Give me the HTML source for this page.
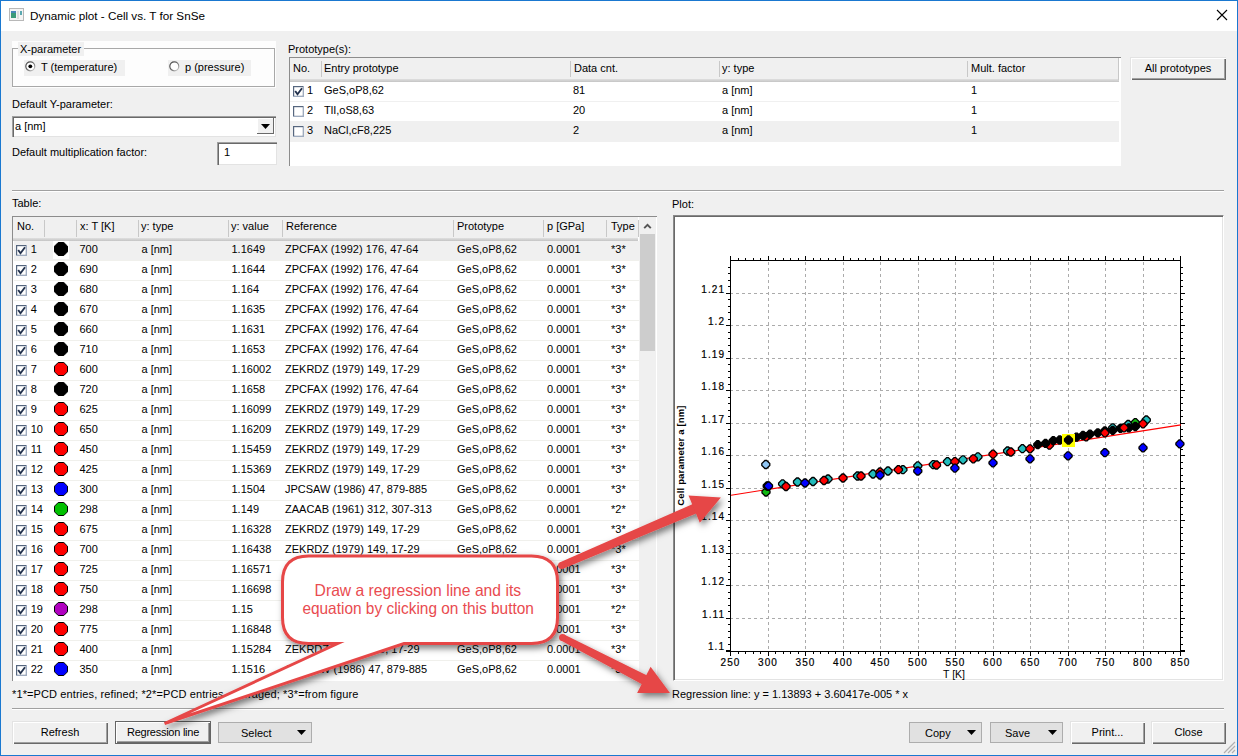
<!DOCTYPE html>
<html><head><meta charset="utf-8"><style>
html,body{margin:0;padding:0;width:1238px;height:756px;overflow:hidden;background:#f0f0f0;}
.t{position:absolute;font-family:"Liberation Sans", sans-serif;font-size:11px;letter-spacing:0px;line-height:13px;white-space:nowrap;color:#000;}
</style></head><body>
<div style="position:absolute;left:0px;top:0px;width:1238px;height:756px;background:#f0f0f0;"></div>
<div style="position:absolute;left:0px;top:0px;width:1238px;height:31px;background:#fff;"></div>
<svg style="position:absolute;left:9px;top:8px" width="15" height="13"><rect x="0.5" y="0.5" width="14" height="12" fill="#f4f4f4" stroke="#b8b8b8"/><rect x="2" y="3" width="5" height="7" fill="#3c9a78"/><rect x="2" y="3" width="5" height="2" fill="#4a86b8"/><rect x="8" y="3" width="2" height="8" fill="#dcdcdc"/><rect x="11" y="3" width="2" height="4" fill="#5aa8b0"/></svg>
<div class="t" style="left:30px;top:9.25px;font-size:11.7px;color:#000;">Dynamic plot - Cell vs. T for SnSe</div>
<svg style="position:absolute;left:1216px;top:9px" width="12" height="12"><path d="M1 1 L11 11 M11 1 L1 11" stroke="#000" stroke-width="1.1"/></svg>
<div style="position:absolute;left:12px;top:41px;width:264px;height:47px;background:#fdfdfd;"></div>
<div style="position:absolute;left:12px;top:48px;width:263px;height:39px;border:1px solid #a8a8a8;box-sizing:border-box;"></div>
<div style="position:absolute;left:18px;top:42px;width:66px;height:14px;background:#f0f0f0;"></div>
<div class="t" style="left:20px;top:42.69px;font-size:11px;color:#000;">X-parameter</div>
<div style="position:absolute;left:24px;top:60px;width:101px;height:16px;background:#f0f0f0;"></div>
<div style="position:absolute;left:168px;top:60px;width:83px;height:16px;background:#f0f0f0;"></div>
<svg style="position:absolute;left:25px;top:61px" width="11" height="11"><defs><linearGradient id="rg" x1="0" y1="0" x2="1" y2="1"><stop offset="0" stop-color="#404040"/><stop offset="0.55" stop-color="#707070"/><stop offset="1" stop-color="#e0e0e0"/></linearGradient></defs><circle cx="5.3" cy="5.3" r="4.5" fill="#fff" stroke="url(#rg)" stroke-width="1.2"/><circle cx="5.3" cy="5.3" r="1.9" fill="#000"/></svg>
<div class="t" style="left:41px;top:61.49px;font-size:11px;color:#000;">T (temperature)</div>
<svg style="position:absolute;left:169px;top:61px" width="11" height="11"><circle cx="5.3" cy="5.3" r="4.5" fill="#fff" stroke="url(#rg)" stroke-width="1.2"/></svg>
<div class="t" style="left:185px;top:61.49px;font-size:11px;color:#000;">p (pressure)</div>
<div class="t" style="left:12px;top:97.79px;font-size:11px;color:#000;">Default Y-parameter:</div>
<div style="position:absolute;left:12px;top:116px;width:263px;height:20px;background:#fff;border-top:1px solid #a0a0a0;border-left:1px solid #a0a0a0;box-shadow:inset 1px 1px 0 #696969, inset -1px -1px 0 #e3e3e3;"></div>
<div style="position:absolute;left:257px;top:118px;width:17px;height:16px;background:#f0f0f0;border-right:1px solid #696969;border-bottom:1px solid #696969;box-sizing:border-box;box-shadow:inset 1px 1px 0 #fff;"></div>
<svg style="position:absolute;left:261px;top:124px" width="9" height="5"><path d="M0 0 H9 L4.5 5 Z" fill="#000"/></svg>
<div class="t" style="left:15px;top:120.19px;font-size:11px;color:#000;">a [nm]</div>
<div class="t" style="left:12px;top:145.59px;font-size:11px;color:#000;">Default multiplication factor:</div>
<div style="position:absolute;left:217px;top:142px;width:59px;height:22px;background:#fff;border-top:1px solid #a0a0a0;border-left:1px solid #a0a0a0;box-shadow:inset 1px 1px 0 #696969, inset -1px -1px 0 #e3e3e3;"></div>
<div class="t" style="left:224px;top:146.19px;font-size:11px;color:#000;">1</div>
<div class="t" style="left:288px;top:42.59px;font-size:11px;color:#000;">Prototype(s):</div>
<div style="position:absolute;left:289px;top:57px;width:832px;height:109px;background:#fff;border-top:1px solid #8c8c8c;border-left:1px solid #8c8c8c;box-sizing:border-box;"></div>
<div style="position:absolute;left:290px;top:58px;width:829px;height:22px;background:#f0f0f0;"></div>
<div style="position:absolute;left:290px;top:79px;width:829px;height:3px;background:linear-gradient(#e0e0e0,#c4c4c4);"></div>
<div style="position:absolute;left:321px;top:61px;width:1px;height:16px;background:#c8c8c8;"></div>
<div style="position:absolute;left:570px;top:61px;width:1px;height:16px;background:#c8c8c8;"></div>
<div style="position:absolute;left:719px;top:61px;width:1px;height:16px;background:#c8c8c8;"></div>
<div style="position:absolute;left:967px;top:61px;width:1px;height:16px;background:#c8c8c8;"></div>
<div style="position:absolute;left:1118px;top:58px;width:1px;height:22px;background:#c8c8c8;"></div>
<div class="t" style="left:293px;top:61.59px;font-size:11px;color:#000;">No.</div>
<div class="t" style="left:324px;top:61.59px;font-size:11px;color:#000;">Entry prototype</div>
<div class="t" style="left:574px;top:61.59px;font-size:11px;color:#000;">Data cnt.</div>
<div class="t" style="left:722px;top:61.59px;font-size:11px;color:#000;">y: type</div>
<div class="t" style="left:971px;top:61.59px;font-size:11px;color:#000;">Mult. factor</div>
<div style="position:absolute;left:290px;top:101px;width:829px;height:1px;background:#f0f0f0;"></div>
<svg style="position:absolute;left:293px;top:86px" width="11" height="11"><rect x="0" y="0" width="11" height="11" fill="#9eabbf"/><rect x="0" y="0" width="10" height="10" fill="#56667e"/><rect x="1.2" y="1.2" width="8.6" height="8.6" fill="#fff"/><path d="M2.2 5 L4.5 8.2 L9 2.2" stroke="#23324d" stroke-width="1.9" fill="none"/></svg>
<div class="t" style="left:307px;top:84.49px;font-size:11px;color:#000;">1</div>
<div class="t" style="left:324px;top:84.49px;font-size:11px;color:#000;">GeS,oP8,62</div>
<div class="t" style="left:573px;top:84.49px;font-size:11px;color:#000;">81</div>
<div class="t" style="left:722px;top:84.49px;font-size:11px;color:#000;">a [nm]</div>
<div class="t" style="left:971px;top:84.49px;font-size:11px;color:#000;">1</div>
<div style="position:absolute;left:290px;top:121px;width:829px;height:1px;background:#f0f0f0;"></div>
<svg style="position:absolute;left:293px;top:106px" width="11" height="11"><rect x="0" y="0" width="11" height="11" fill="#9eabbf"/><rect x="0" y="0" width="10" height="10" fill="#56667e"/><rect x="1.2" y="1.2" width="8.6" height="8.6" fill="#fff"/></svg>
<div class="t" style="left:307px;top:104.49px;font-size:11px;color:#000;">2</div>
<div class="t" style="left:324px;top:104.49px;font-size:11px;color:#000;">TlI,oS8,63</div>
<div class="t" style="left:573px;top:104.49px;font-size:11px;color:#000;">20</div>
<div class="t" style="left:722px;top:104.49px;font-size:11px;color:#000;">a [nm]</div>
<div class="t" style="left:971px;top:104.49px;font-size:11px;color:#000;">1</div>
<div style="position:absolute;left:290px;top:122px;width:829px;height:20px;background:#f0f0f0;"></div>
<div style="position:absolute;left:290px;top:141px;width:829px;height:1px;background:#f0f0f0;"></div>
<svg style="position:absolute;left:293px;top:126px" width="11" height="11"><rect x="0" y="0" width="11" height="11" fill="#9eabbf"/><rect x="0" y="0" width="10" height="10" fill="#56667e"/><rect x="1.2" y="1.2" width="8.6" height="8.6" fill="#fff"/></svg>
<div class="t" style="left:307px;top:124.49px;font-size:11px;color:#000;">3</div>
<div class="t" style="left:324px;top:124.49px;font-size:11px;color:#000;">NaCl,cF8,225</div>
<div class="t" style="left:573px;top:124.49px;font-size:11px;color:#000;">2</div>
<div class="t" style="left:722px;top:124.49px;font-size:11px;color:#000;">a [nm]</div>
<div class="t" style="left:971px;top:124.49px;font-size:11px;color:#000;">1</div>
<div style="position:absolute;left:1130px;top:57px;width:96px;height:23px;background:#f0f0f0;box-sizing:border-box;box-shadow:inset 1px 1px 0 #e3e3e3, inset 2px 2px 0 #fff, inset -1px -1px 0 #696969, inset -2px -2px 0 #a0a0a0;"></div>
<div class="t" style="left:1130px;top:61.5px;width:96px;text-align:center;letter-spacing:0px">All prototypes</div>
<div style="position:absolute;left:12px;top:190px;width:1212px;height:1px;background:#a0a0a0;"></div>
<div style="position:absolute;left:12px;top:191px;width:1212px;height:1px;background:#fff;"></div>
<div class="t" style="left:12px;top:197.39px;font-size:11px;color:#000;">Table:</div>
<div style="position:absolute;left:12px;top:216px;width:645px;height:465px;background:#fff;border-top:1px solid #8c8c8c;border-left:1px solid #8c8c8c;box-sizing:border-box;"></div>
<div style="position:absolute;left:13px;top:217px;width:625px;height:22px;background:#f0f0f0;"></div>
<div style="position:absolute;left:13px;top:238px;width:625px;height:3px;background:linear-gradient(#e0e0e0,#c4c4c4);"></div>
<div style="position:absolute;left:44px;top:220px;width:1px;height:17px;background:#c8c8c8;"></div>
<div style="position:absolute;left:76px;top:220px;width:1px;height:17px;background:#c8c8c8;"></div>
<div style="position:absolute;left:138px;top:220px;width:1px;height:17px;background:#c8c8c8;"></div>
<div style="position:absolute;left:228px;top:220px;width:1px;height:17px;background:#c8c8c8;"></div>
<div style="position:absolute;left:282px;top:220px;width:1px;height:17px;background:#c8c8c8;"></div>
<div style="position:absolute;left:453px;top:220px;width:1px;height:17px;background:#c8c8c8;"></div>
<div style="position:absolute;left:543px;top:220px;width:1px;height:17px;background:#c8c8c8;"></div>
<div style="position:absolute;left:606px;top:220px;width:1px;height:17px;background:#c8c8c8;"></div>
<div style="position:absolute;left:638px;top:220px;width:1px;height:17px;background:#c8c8c8;"></div>
<div class="t" style="left:17px;top:220.49px;font-size:11px;color:#000;">No.</div>
<div class="t" style="left:80px;top:220.49px;font-size:11px;color:#000;">x: T [K]</div>
<div class="t" style="left:141px;top:220.49px;font-size:11px;color:#000;">y: type</div>
<div class="t" style="left:231px;top:220.49px;font-size:11px;color:#000;">y: value</div>
<div class="t" style="left:286px;top:220.49px;font-size:11px;color:#000;">Reference</div>
<div class="t" style="left:457px;top:220.49px;font-size:11px;color:#000;">Prototype</div>
<div class="t" style="left:547px;top:220.49px;font-size:11px;color:#000;">p [GPa]</div>
<div class="t" style="left:611px;top:220.49px;font-size:11px;color:#000;">Type</div>
<div style="position:absolute;left:639px;top:217px;width:17px;height:463px;background:#f0f0f0;"></div>
<div style="position:absolute;left:640px;top:234px;width:15px;height:117px;background:#cdcdcd;"></div>
<svg style="position:absolute;left:643px;top:223px" width="9" height="6"><path d="M1.2 5.2 L4.5 1.8 L7.8 5.2" stroke="#555" stroke-width="1.9" fill="none"/></svg>
<div style="position:absolute;left:14px;top:241px;width:625px;height:439px;overflow:hidden;">
<div style="position:absolute;left:0;top:0px;width:625px;height:19px;background:#f0f0f0"></div>
<div style="position:absolute;left:0;top:19px;width:625px;height:1px;background:#f0f0ec"></div>
<svg style="position:absolute;left:2px;top:4px" width="11" height="11"><rect x="0" y="0" width="11" height="11" fill="#9eabbf"/><rect x="0" y="0" width="10" height="10" fill="#56667e"/><rect x="1.2" y="1.2" width="8.6" height="8.6" fill="#fff"/><path d="M2.2 5 L4.5 8.2 L9 2.2" stroke="#23324d" stroke-width="1.9" fill="none"/></svg>
<div class="t" style="left:16.7px;top:2.29px">1</div>
<div style="position:absolute;left:39px;top:0px;width:16px;height:18px;background:#fff"></div>
<svg style="position:absolute;left:40px;top:1px" width="14" height="14"><polygon points="4.2,0.5 9.8,0.5 13.5,4.2 13.5,9.8 9.8,13.5 4.2,13.5 0.5,9.8 0.5,4.2" fill="#000" stroke="#000" stroke-width="1"/></svg>
<div class="t" style="left:65.4px;top:2.29px">700</div>
<div class="t" style="left:127.5px;top:2.29px">a [nm]</div>
<div class="t" style="left:217.5px;top:2.29px">1.1649</div>
<div class="t" style="left:271px;top:2.29px">ZPCFAX (1992) 176, 47-64</div>
<div class="t" style="left:443px;top:2.29px">GeS,oP8,62</div>
<div class="t" style="left:533px;top:2.29px">0.0001</div>
<div class="t" style="left:597px;top:2.29px">*3*</div>
<div style="position:absolute;left:0;top:39px;width:625px;height:1px;background:#f0f0ec"></div>
<svg style="position:absolute;left:2px;top:24px" width="11" height="11"><rect x="0" y="0" width="11" height="11" fill="#9eabbf"/><rect x="0" y="0" width="10" height="10" fill="#56667e"/><rect x="1.2" y="1.2" width="8.6" height="8.6" fill="#fff"/><path d="M2.2 5 L4.5 8.2 L9 2.2" stroke="#23324d" stroke-width="1.9" fill="none"/></svg>
<div class="t" style="left:16.7px;top:22.29px">2</div>
<div style="position:absolute;left:39px;top:20px;width:16px;height:18px;background:#fff"></div>
<svg style="position:absolute;left:40px;top:21px" width="14" height="14"><polygon points="4.2,0.5 9.8,0.5 13.5,4.2 13.5,9.8 9.8,13.5 4.2,13.5 0.5,9.8 0.5,4.2" fill="#000" stroke="#000" stroke-width="1"/></svg>
<div class="t" style="left:65.4px;top:22.29px">690</div>
<div class="t" style="left:127.5px;top:22.29px">a [nm]</div>
<div class="t" style="left:217.5px;top:22.29px">1.1644</div>
<div class="t" style="left:271px;top:22.29px">ZPCFAX (1992) 176, 47-64</div>
<div class="t" style="left:443px;top:22.29px">GeS,oP8,62</div>
<div class="t" style="left:533px;top:22.29px">0.0001</div>
<div class="t" style="left:597px;top:22.29px">*3*</div>
<div style="position:absolute;left:0;top:59px;width:625px;height:1px;background:#f0f0ec"></div>
<svg style="position:absolute;left:2px;top:44px" width="11" height="11"><rect x="0" y="0" width="11" height="11" fill="#9eabbf"/><rect x="0" y="0" width="10" height="10" fill="#56667e"/><rect x="1.2" y="1.2" width="8.6" height="8.6" fill="#fff"/><path d="M2.2 5 L4.5 8.2 L9 2.2" stroke="#23324d" stroke-width="1.9" fill="none"/></svg>
<div class="t" style="left:16.7px;top:42.29px">3</div>
<div style="position:absolute;left:39px;top:40px;width:16px;height:18px;background:#fff"></div>
<svg style="position:absolute;left:40px;top:41px" width="14" height="14"><polygon points="4.2,0.5 9.8,0.5 13.5,4.2 13.5,9.8 9.8,13.5 4.2,13.5 0.5,9.8 0.5,4.2" fill="#000" stroke="#000" stroke-width="1"/></svg>
<div class="t" style="left:65.4px;top:42.29px">680</div>
<div class="t" style="left:127.5px;top:42.29px">a [nm]</div>
<div class="t" style="left:217.5px;top:42.29px">1.164</div>
<div class="t" style="left:271px;top:42.29px">ZPCFAX (1992) 176, 47-64</div>
<div class="t" style="left:443px;top:42.29px">GeS,oP8,62</div>
<div class="t" style="left:533px;top:42.29px">0.0001</div>
<div class="t" style="left:597px;top:42.29px">*3*</div>
<div style="position:absolute;left:0;top:79px;width:625px;height:1px;background:#f0f0ec"></div>
<svg style="position:absolute;left:2px;top:64px" width="11" height="11"><rect x="0" y="0" width="11" height="11" fill="#9eabbf"/><rect x="0" y="0" width="10" height="10" fill="#56667e"/><rect x="1.2" y="1.2" width="8.6" height="8.6" fill="#fff"/><path d="M2.2 5 L4.5 8.2 L9 2.2" stroke="#23324d" stroke-width="1.9" fill="none"/></svg>
<div class="t" style="left:16.7px;top:62.29px">4</div>
<div style="position:absolute;left:39px;top:60px;width:16px;height:18px;background:#fff"></div>
<svg style="position:absolute;left:40px;top:61px" width="14" height="14"><polygon points="4.2,0.5 9.8,0.5 13.5,4.2 13.5,9.8 9.8,13.5 4.2,13.5 0.5,9.8 0.5,4.2" fill="#000" stroke="#000" stroke-width="1"/></svg>
<div class="t" style="left:65.4px;top:62.29px">670</div>
<div class="t" style="left:127.5px;top:62.29px">a [nm]</div>
<div class="t" style="left:217.5px;top:62.29px">1.1635</div>
<div class="t" style="left:271px;top:62.29px">ZPCFAX (1992) 176, 47-64</div>
<div class="t" style="left:443px;top:62.29px">GeS,oP8,62</div>
<div class="t" style="left:533px;top:62.29px">0.0001</div>
<div class="t" style="left:597px;top:62.29px">*3*</div>
<div style="position:absolute;left:0;top:99px;width:625px;height:1px;background:#f0f0ec"></div>
<svg style="position:absolute;left:2px;top:84px" width="11" height="11"><rect x="0" y="0" width="11" height="11" fill="#9eabbf"/><rect x="0" y="0" width="10" height="10" fill="#56667e"/><rect x="1.2" y="1.2" width="8.6" height="8.6" fill="#fff"/><path d="M2.2 5 L4.5 8.2 L9 2.2" stroke="#23324d" stroke-width="1.9" fill="none"/></svg>
<div class="t" style="left:16.7px;top:82.29px">5</div>
<div style="position:absolute;left:39px;top:80px;width:16px;height:18px;background:#fff"></div>
<svg style="position:absolute;left:40px;top:81px" width="14" height="14"><polygon points="4.2,0.5 9.8,0.5 13.5,4.2 13.5,9.8 9.8,13.5 4.2,13.5 0.5,9.8 0.5,4.2" fill="#000" stroke="#000" stroke-width="1"/></svg>
<div class="t" style="left:65.4px;top:82.29px">660</div>
<div class="t" style="left:127.5px;top:82.29px">a [nm]</div>
<div class="t" style="left:217.5px;top:82.29px">1.1631</div>
<div class="t" style="left:271px;top:82.29px">ZPCFAX (1992) 176, 47-64</div>
<div class="t" style="left:443px;top:82.29px">GeS,oP8,62</div>
<div class="t" style="left:533px;top:82.29px">0.0001</div>
<div class="t" style="left:597px;top:82.29px">*3*</div>
<div style="position:absolute;left:0;top:119px;width:625px;height:1px;background:#f0f0ec"></div>
<svg style="position:absolute;left:2px;top:104px" width="11" height="11"><rect x="0" y="0" width="11" height="11" fill="#9eabbf"/><rect x="0" y="0" width="10" height="10" fill="#56667e"/><rect x="1.2" y="1.2" width="8.6" height="8.6" fill="#fff"/><path d="M2.2 5 L4.5 8.2 L9 2.2" stroke="#23324d" stroke-width="1.9" fill="none"/></svg>
<div class="t" style="left:16.7px;top:102.29px">6</div>
<div style="position:absolute;left:39px;top:100px;width:16px;height:18px;background:#fff"></div>
<svg style="position:absolute;left:40px;top:101px" width="14" height="14"><polygon points="4.2,0.5 9.8,0.5 13.5,4.2 13.5,9.8 9.8,13.5 4.2,13.5 0.5,9.8 0.5,4.2" fill="#000" stroke="#000" stroke-width="1"/></svg>
<div class="t" style="left:65.4px;top:102.29px">710</div>
<div class="t" style="left:127.5px;top:102.29px">a [nm]</div>
<div class="t" style="left:217.5px;top:102.29px">1.1653</div>
<div class="t" style="left:271px;top:102.29px">ZPCFAX (1992) 176, 47-64</div>
<div class="t" style="left:443px;top:102.29px">GeS,oP8,62</div>
<div class="t" style="left:533px;top:102.29px">0.0001</div>
<div class="t" style="left:597px;top:102.29px">*3*</div>
<div style="position:absolute;left:0;top:139px;width:625px;height:1px;background:#f0f0ec"></div>
<svg style="position:absolute;left:2px;top:124px" width="11" height="11"><rect x="0" y="0" width="11" height="11" fill="#9eabbf"/><rect x="0" y="0" width="10" height="10" fill="#56667e"/><rect x="1.2" y="1.2" width="8.6" height="8.6" fill="#fff"/><path d="M2.2 5 L4.5 8.2 L9 2.2" stroke="#23324d" stroke-width="1.9" fill="none"/></svg>
<div class="t" style="left:16.7px;top:122.29px">7</div>
<div style="position:absolute;left:39px;top:120px;width:16px;height:18px;background:#fff"></div>
<svg style="position:absolute;left:40px;top:121px" width="14" height="14"><polygon points="4.2,0.5 9.8,0.5 13.5,4.2 13.5,9.8 9.8,13.5 4.2,13.5 0.5,9.8 0.5,4.2" fill="#f00" stroke="#000" stroke-width="1"/></svg>
<div class="t" style="left:65.4px;top:122.29px">600</div>
<div class="t" style="left:127.5px;top:122.29px">a [nm]</div>
<div class="t" style="left:217.5px;top:122.29px">1.16002</div>
<div class="t" style="left:271px;top:122.29px">ZEKRDZ (1979) 149, 17-29</div>
<div class="t" style="left:443px;top:122.29px">GeS,oP8,62</div>
<div class="t" style="left:533px;top:122.29px">0.0001</div>
<div class="t" style="left:597px;top:122.29px">*3*</div>
<div style="position:absolute;left:0;top:159px;width:625px;height:1px;background:#f0f0ec"></div>
<svg style="position:absolute;left:2px;top:144px" width="11" height="11"><rect x="0" y="0" width="11" height="11" fill="#9eabbf"/><rect x="0" y="0" width="10" height="10" fill="#56667e"/><rect x="1.2" y="1.2" width="8.6" height="8.6" fill="#fff"/><path d="M2.2 5 L4.5 8.2 L9 2.2" stroke="#23324d" stroke-width="1.9" fill="none"/></svg>
<div class="t" style="left:16.7px;top:142.29px">8</div>
<div style="position:absolute;left:39px;top:140px;width:16px;height:18px;background:#fff"></div>
<svg style="position:absolute;left:40px;top:141px" width="14" height="14"><polygon points="4.2,0.5 9.8,0.5 13.5,4.2 13.5,9.8 9.8,13.5 4.2,13.5 0.5,9.8 0.5,4.2" fill="#000" stroke="#000" stroke-width="1"/></svg>
<div class="t" style="left:65.4px;top:142.29px">720</div>
<div class="t" style="left:127.5px;top:142.29px">a [nm]</div>
<div class="t" style="left:217.5px;top:142.29px">1.1658</div>
<div class="t" style="left:271px;top:142.29px">ZPCFAX (1992) 176, 47-64</div>
<div class="t" style="left:443px;top:142.29px">GeS,oP8,62</div>
<div class="t" style="left:533px;top:142.29px">0.0001</div>
<div class="t" style="left:597px;top:142.29px">*3*</div>
<div style="position:absolute;left:0;top:179px;width:625px;height:1px;background:#f0f0ec"></div>
<svg style="position:absolute;left:2px;top:164px" width="11" height="11"><rect x="0" y="0" width="11" height="11" fill="#9eabbf"/><rect x="0" y="0" width="10" height="10" fill="#56667e"/><rect x="1.2" y="1.2" width="8.6" height="8.6" fill="#fff"/><path d="M2.2 5 L4.5 8.2 L9 2.2" stroke="#23324d" stroke-width="1.9" fill="none"/></svg>
<div class="t" style="left:16.7px;top:162.29px">9</div>
<div style="position:absolute;left:39px;top:160px;width:16px;height:18px;background:#fff"></div>
<svg style="position:absolute;left:40px;top:161px" width="14" height="14"><polygon points="4.2,0.5 9.8,0.5 13.5,4.2 13.5,9.8 9.8,13.5 4.2,13.5 0.5,9.8 0.5,4.2" fill="#f00" stroke="#000" stroke-width="1"/></svg>
<div class="t" style="left:65.4px;top:162.29px">625</div>
<div class="t" style="left:127.5px;top:162.29px">a [nm]</div>
<div class="t" style="left:217.5px;top:162.29px">1.16099</div>
<div class="t" style="left:271px;top:162.29px">ZEKRDZ (1979) 149, 17-29</div>
<div class="t" style="left:443px;top:162.29px">GeS,oP8,62</div>
<div class="t" style="left:533px;top:162.29px">0.0001</div>
<div class="t" style="left:597px;top:162.29px">*3*</div>
<div style="position:absolute;left:0;top:199px;width:625px;height:1px;background:#f0f0ec"></div>
<svg style="position:absolute;left:2px;top:184px" width="11" height="11"><rect x="0" y="0" width="11" height="11" fill="#9eabbf"/><rect x="0" y="0" width="10" height="10" fill="#56667e"/><rect x="1.2" y="1.2" width="8.6" height="8.6" fill="#fff"/><path d="M2.2 5 L4.5 8.2 L9 2.2" stroke="#23324d" stroke-width="1.9" fill="none"/></svg>
<div class="t" style="left:16.7px;top:182.29px">10</div>
<div style="position:absolute;left:39px;top:180px;width:16px;height:18px;background:#fff"></div>
<svg style="position:absolute;left:40px;top:181px" width="14" height="14"><polygon points="4.2,0.5 9.8,0.5 13.5,4.2 13.5,9.8 9.8,13.5 4.2,13.5 0.5,9.8 0.5,4.2" fill="#f00" stroke="#000" stroke-width="1"/></svg>
<div class="t" style="left:65.4px;top:182.29px">650</div>
<div class="t" style="left:127.5px;top:182.29px">a [nm]</div>
<div class="t" style="left:217.5px;top:182.29px">1.16209</div>
<div class="t" style="left:271px;top:182.29px">ZEKRDZ (1979) 149, 17-29</div>
<div class="t" style="left:443px;top:182.29px">GeS,oP8,62</div>
<div class="t" style="left:533px;top:182.29px">0.0001</div>
<div class="t" style="left:597px;top:182.29px">*3*</div>
<div style="position:absolute;left:0;top:219px;width:625px;height:1px;background:#f0f0ec"></div>
<svg style="position:absolute;left:2px;top:204px" width="11" height="11"><rect x="0" y="0" width="11" height="11" fill="#9eabbf"/><rect x="0" y="0" width="10" height="10" fill="#56667e"/><rect x="1.2" y="1.2" width="8.6" height="8.6" fill="#fff"/><path d="M2.2 5 L4.5 8.2 L9 2.2" stroke="#23324d" stroke-width="1.9" fill="none"/></svg>
<div class="t" style="left:16.7px;top:202.29px">11</div>
<div style="position:absolute;left:39px;top:200px;width:16px;height:18px;background:#fff"></div>
<svg style="position:absolute;left:40px;top:201px" width="14" height="14"><polygon points="4.2,0.5 9.8,0.5 13.5,4.2 13.5,9.8 9.8,13.5 4.2,13.5 0.5,9.8 0.5,4.2" fill="#f00" stroke="#000" stroke-width="1"/></svg>
<div class="t" style="left:65.4px;top:202.29px">450</div>
<div class="t" style="left:127.5px;top:202.29px">a [nm]</div>
<div class="t" style="left:217.5px;top:202.29px">1.15459</div>
<div class="t" style="left:271px;top:202.29px">ZEKRDZ (1979) 149, 17-29</div>
<div class="t" style="left:443px;top:202.29px">GeS,oP8,62</div>
<div class="t" style="left:533px;top:202.29px">0.0001</div>
<div class="t" style="left:597px;top:202.29px">*3*</div>
<div style="position:absolute;left:0;top:239px;width:625px;height:1px;background:#f0f0ec"></div>
<svg style="position:absolute;left:2px;top:224px" width="11" height="11"><rect x="0" y="0" width="11" height="11" fill="#9eabbf"/><rect x="0" y="0" width="10" height="10" fill="#56667e"/><rect x="1.2" y="1.2" width="8.6" height="8.6" fill="#fff"/><path d="M2.2 5 L4.5 8.2 L9 2.2" stroke="#23324d" stroke-width="1.9" fill="none"/></svg>
<div class="t" style="left:16.7px;top:222.29px">12</div>
<div style="position:absolute;left:39px;top:220px;width:16px;height:18px;background:#fff"></div>
<svg style="position:absolute;left:40px;top:221px" width="14" height="14"><polygon points="4.2,0.5 9.8,0.5 13.5,4.2 13.5,9.8 9.8,13.5 4.2,13.5 0.5,9.8 0.5,4.2" fill="#f00" stroke="#000" stroke-width="1"/></svg>
<div class="t" style="left:65.4px;top:222.29px">425</div>
<div class="t" style="left:127.5px;top:222.29px">a [nm]</div>
<div class="t" style="left:217.5px;top:222.29px">1.15369</div>
<div class="t" style="left:271px;top:222.29px">ZEKRDZ (1979) 149, 17-29</div>
<div class="t" style="left:443px;top:222.29px">GeS,oP8,62</div>
<div class="t" style="left:533px;top:222.29px">0.0001</div>
<div class="t" style="left:597px;top:222.29px">*3*</div>
<div style="position:absolute;left:0;top:259px;width:625px;height:1px;background:#f0f0ec"></div>
<svg style="position:absolute;left:2px;top:244px" width="11" height="11"><rect x="0" y="0" width="11" height="11" fill="#9eabbf"/><rect x="0" y="0" width="10" height="10" fill="#56667e"/><rect x="1.2" y="1.2" width="8.6" height="8.6" fill="#fff"/><path d="M2.2 5 L4.5 8.2 L9 2.2" stroke="#23324d" stroke-width="1.9" fill="none"/></svg>
<div class="t" style="left:16.7px;top:242.29px">13</div>
<div style="position:absolute;left:39px;top:240px;width:16px;height:18px;background:#fff"></div>
<svg style="position:absolute;left:40px;top:241px" width="14" height="14"><polygon points="4.2,0.5 9.8,0.5 13.5,4.2 13.5,9.8 9.8,13.5 4.2,13.5 0.5,9.8 0.5,4.2" fill="#00f" stroke="#000" stroke-width="1"/></svg>
<div class="t" style="left:65.4px;top:242.29px">300</div>
<div class="t" style="left:127.5px;top:242.29px">a [nm]</div>
<div class="t" style="left:217.5px;top:242.29px">1.1504</div>
<div class="t" style="left:271px;top:242.29px">JPCSAW (1986) 47, 879-885</div>
<div class="t" style="left:443px;top:242.29px">GeS,oP8,62</div>
<div class="t" style="left:533px;top:242.29px">0.0001</div>
<div class="t" style="left:597px;top:242.29px">*3*</div>
<div style="position:absolute;left:0;top:279px;width:625px;height:1px;background:#f0f0ec"></div>
<svg style="position:absolute;left:2px;top:264px" width="11" height="11"><rect x="0" y="0" width="11" height="11" fill="#9eabbf"/><rect x="0" y="0" width="10" height="10" fill="#56667e"/><rect x="1.2" y="1.2" width="8.6" height="8.6" fill="#fff"/><path d="M2.2 5 L4.5 8.2 L9 2.2" stroke="#23324d" stroke-width="1.9" fill="none"/></svg>
<div class="t" style="left:16.7px;top:262.29px">14</div>
<div style="position:absolute;left:39px;top:260px;width:16px;height:18px;background:#fff"></div>
<svg style="position:absolute;left:40px;top:261px" width="14" height="14"><polygon points="4.2,0.5 9.8,0.5 13.5,4.2 13.5,9.8 9.8,13.5 4.2,13.5 0.5,9.8 0.5,4.2" fill="#00c000" stroke="#000" stroke-width="1"/></svg>
<div class="t" style="left:65.4px;top:262.29px">298</div>
<div class="t" style="left:127.5px;top:262.29px">a [nm]</div>
<div class="t" style="left:217.5px;top:262.29px">1.149</div>
<div class="t" style="left:271px;top:262.29px">ZAACAB (1961) 312, 307-313</div>
<div class="t" style="left:443px;top:262.29px">GeS,oP8,62</div>
<div class="t" style="left:533px;top:262.29px">0.0001</div>
<div class="t" style="left:597px;top:262.29px">*2*</div>
<div style="position:absolute;left:0;top:299px;width:625px;height:1px;background:#f0f0ec"></div>
<svg style="position:absolute;left:2px;top:284px" width="11" height="11"><rect x="0" y="0" width="11" height="11" fill="#9eabbf"/><rect x="0" y="0" width="10" height="10" fill="#56667e"/><rect x="1.2" y="1.2" width="8.6" height="8.6" fill="#fff"/><path d="M2.2 5 L4.5 8.2 L9 2.2" stroke="#23324d" stroke-width="1.9" fill="none"/></svg>
<div class="t" style="left:16.7px;top:282.29px">15</div>
<div style="position:absolute;left:39px;top:280px;width:16px;height:18px;background:#fff"></div>
<svg style="position:absolute;left:40px;top:281px" width="14" height="14"><polygon points="4.2,0.5 9.8,0.5 13.5,4.2 13.5,9.8 9.8,13.5 4.2,13.5 0.5,9.8 0.5,4.2" fill="#f00" stroke="#000" stroke-width="1"/></svg>
<div class="t" style="left:65.4px;top:282.29px">675</div>
<div class="t" style="left:127.5px;top:282.29px">a [nm]</div>
<div class="t" style="left:217.5px;top:282.29px">1.16328</div>
<div class="t" style="left:271px;top:282.29px">ZEKRDZ (1979) 149, 17-29</div>
<div class="t" style="left:443px;top:282.29px">GeS,oP8,62</div>
<div class="t" style="left:533px;top:282.29px">0.0001</div>
<div class="t" style="left:597px;top:282.29px">*3*</div>
<div style="position:absolute;left:0;top:319px;width:625px;height:1px;background:#f0f0ec"></div>
<svg style="position:absolute;left:2px;top:304px" width="11" height="11"><rect x="0" y="0" width="11" height="11" fill="#9eabbf"/><rect x="0" y="0" width="10" height="10" fill="#56667e"/><rect x="1.2" y="1.2" width="8.6" height="8.6" fill="#fff"/><path d="M2.2 5 L4.5 8.2 L9 2.2" stroke="#23324d" stroke-width="1.9" fill="none"/></svg>
<div class="t" style="left:16.7px;top:302.29px">16</div>
<div style="position:absolute;left:39px;top:300px;width:16px;height:18px;background:#fff"></div>
<svg style="position:absolute;left:40px;top:301px" width="14" height="14"><polygon points="4.2,0.5 9.8,0.5 13.5,4.2 13.5,9.8 9.8,13.5 4.2,13.5 0.5,9.8 0.5,4.2" fill="#f00" stroke="#000" stroke-width="1"/></svg>
<div class="t" style="left:65.4px;top:302.29px">700</div>
<div class="t" style="left:127.5px;top:302.29px">a [nm]</div>
<div class="t" style="left:217.5px;top:302.29px">1.16438</div>
<div class="t" style="left:271px;top:302.29px">ZEKRDZ (1979) 149, 17-29</div>
<div class="t" style="left:443px;top:302.29px">GeS,oP8,62</div>
<div class="t" style="left:533px;top:302.29px">0.0001</div>
<div class="t" style="left:597px;top:302.29px">*3*</div>
<div style="position:absolute;left:0;top:339px;width:625px;height:1px;background:#f0f0ec"></div>
<svg style="position:absolute;left:2px;top:324px" width="11" height="11"><rect x="0" y="0" width="11" height="11" fill="#9eabbf"/><rect x="0" y="0" width="10" height="10" fill="#56667e"/><rect x="1.2" y="1.2" width="8.6" height="8.6" fill="#fff"/><path d="M2.2 5 L4.5 8.2 L9 2.2" stroke="#23324d" stroke-width="1.9" fill="none"/></svg>
<div class="t" style="left:16.7px;top:322.29px">17</div>
<div style="position:absolute;left:39px;top:320px;width:16px;height:18px;background:#fff"></div>
<svg style="position:absolute;left:40px;top:321px" width="14" height="14"><polygon points="4.2,0.5 9.8,0.5 13.5,4.2 13.5,9.8 9.8,13.5 4.2,13.5 0.5,9.8 0.5,4.2" fill="#f00" stroke="#000" stroke-width="1"/></svg>
<div class="t" style="left:65.4px;top:322.29px">725</div>
<div class="t" style="left:127.5px;top:322.29px">a [nm]</div>
<div class="t" style="left:217.5px;top:322.29px">1.16571</div>
<div class="t" style="left:271px;top:322.29px">ZEKRDZ (1979) 149, 17-29</div>
<div class="t" style="left:443px;top:322.29px">GeS,oP8,62</div>
<div class="t" style="left:533px;top:322.29px">0.0001</div>
<div class="t" style="left:597px;top:322.29px">*3*</div>
<div style="position:absolute;left:0;top:359px;width:625px;height:1px;background:#f0f0ec"></div>
<svg style="position:absolute;left:2px;top:344px" width="11" height="11"><rect x="0" y="0" width="11" height="11" fill="#9eabbf"/><rect x="0" y="0" width="10" height="10" fill="#56667e"/><rect x="1.2" y="1.2" width="8.6" height="8.6" fill="#fff"/><path d="M2.2 5 L4.5 8.2 L9 2.2" stroke="#23324d" stroke-width="1.9" fill="none"/></svg>
<div class="t" style="left:16.7px;top:342.29px">18</div>
<div style="position:absolute;left:39px;top:340px;width:16px;height:18px;background:#fff"></div>
<svg style="position:absolute;left:40px;top:341px" width="14" height="14"><polygon points="4.2,0.5 9.8,0.5 13.5,4.2 13.5,9.8 9.8,13.5 4.2,13.5 0.5,9.8 0.5,4.2" fill="#f00" stroke="#000" stroke-width="1"/></svg>
<div class="t" style="left:65.4px;top:342.29px">750</div>
<div class="t" style="left:127.5px;top:342.29px">a [nm]</div>
<div class="t" style="left:217.5px;top:342.29px">1.16698</div>
<div class="t" style="left:271px;top:342.29px">ZEKRDZ (1979) 149, 17-29</div>
<div class="t" style="left:443px;top:342.29px">GeS,oP8,62</div>
<div class="t" style="left:533px;top:342.29px">0.0001</div>
<div class="t" style="left:597px;top:342.29px">*3*</div>
<div style="position:absolute;left:0;top:379px;width:625px;height:1px;background:#f0f0ec"></div>
<svg style="position:absolute;left:2px;top:364px" width="11" height="11"><rect x="0" y="0" width="11" height="11" fill="#9eabbf"/><rect x="0" y="0" width="10" height="10" fill="#56667e"/><rect x="1.2" y="1.2" width="8.6" height="8.6" fill="#fff"/><path d="M2.2 5 L4.5 8.2 L9 2.2" stroke="#23324d" stroke-width="1.9" fill="none"/></svg>
<div class="t" style="left:16.7px;top:362.29px">19</div>
<div style="position:absolute;left:39px;top:360px;width:16px;height:18px;background:#fff"></div>
<svg style="position:absolute;left:40px;top:361px" width="14" height="14"><polygon points="4.2,0.5 9.8,0.5 13.5,4.2 13.5,9.8 9.8,13.5 4.2,13.5 0.5,9.8 0.5,4.2" fill="#b000c0" stroke="#000" stroke-width="1"/></svg>
<div class="t" style="left:65.4px;top:362.29px">298</div>
<div class="t" style="left:127.5px;top:362.29px">a [nm]</div>
<div class="t" style="left:217.5px;top:362.29px">1.15</div>
<div class="t" style="left:271px;top:362.29px">ZAACAB (1961) 312, 307-313</div>
<div class="t" style="left:443px;top:362.29px">GeS,oP8,62</div>
<div class="t" style="left:533px;top:362.29px">0.0001</div>
<div class="t" style="left:597px;top:362.29px">*2*</div>
<div style="position:absolute;left:0;top:399px;width:625px;height:1px;background:#f0f0ec"></div>
<svg style="position:absolute;left:2px;top:384px" width="11" height="11"><rect x="0" y="0" width="11" height="11" fill="#9eabbf"/><rect x="0" y="0" width="10" height="10" fill="#56667e"/><rect x="1.2" y="1.2" width="8.6" height="8.6" fill="#fff"/><path d="M2.2 5 L4.5 8.2 L9 2.2" stroke="#23324d" stroke-width="1.9" fill="none"/></svg>
<div class="t" style="left:16.7px;top:382.29px">20</div>
<div style="position:absolute;left:39px;top:380px;width:16px;height:18px;background:#fff"></div>
<svg style="position:absolute;left:40px;top:381px" width="14" height="14"><polygon points="4.2,0.5 9.8,0.5 13.5,4.2 13.5,9.8 9.8,13.5 4.2,13.5 0.5,9.8 0.5,4.2" fill="#f00" stroke="#000" stroke-width="1"/></svg>
<div class="t" style="left:65.4px;top:382.29px">775</div>
<div class="t" style="left:127.5px;top:382.29px">a [nm]</div>
<div class="t" style="left:217.5px;top:382.29px">1.16848</div>
<div class="t" style="left:271px;top:382.29px">ZEKRDZ (1979) 149, 17-29</div>
<div class="t" style="left:443px;top:382.29px">GeS,oP8,62</div>
<div class="t" style="left:533px;top:382.29px">0.0001</div>
<div class="t" style="left:597px;top:382.29px">*3*</div>
<div style="position:absolute;left:0;top:419px;width:625px;height:1px;background:#f0f0ec"></div>
<svg style="position:absolute;left:2px;top:404px" width="11" height="11"><rect x="0" y="0" width="11" height="11" fill="#9eabbf"/><rect x="0" y="0" width="10" height="10" fill="#56667e"/><rect x="1.2" y="1.2" width="8.6" height="8.6" fill="#fff"/><path d="M2.2 5 L4.5 8.2 L9 2.2" stroke="#23324d" stroke-width="1.9" fill="none"/></svg>
<div class="t" style="left:16.7px;top:402.29px">21</div>
<div style="position:absolute;left:39px;top:400px;width:16px;height:18px;background:#fff"></div>
<svg style="position:absolute;left:40px;top:401px" width="14" height="14"><polygon points="4.2,0.5 9.8,0.5 13.5,4.2 13.5,9.8 9.8,13.5 4.2,13.5 0.5,9.8 0.5,4.2" fill="#f00" stroke="#000" stroke-width="1"/></svg>
<div class="t" style="left:65.4px;top:402.29px">400</div>
<div class="t" style="left:127.5px;top:402.29px">a [nm]</div>
<div class="t" style="left:217.5px;top:402.29px">1.15284</div>
<div class="t" style="left:271px;top:402.29px">ZEKRDZ (1979) 149, 17-29</div>
<div class="t" style="left:443px;top:402.29px">GeS,oP8,62</div>
<div class="t" style="left:533px;top:402.29px">0.0001</div>
<div class="t" style="left:597px;top:402.29px">*3*</div>
<div style="position:absolute;left:0;top:439px;width:625px;height:1px;background:#f0f0ec"></div>
<svg style="position:absolute;left:2px;top:424px" width="11" height="11"><rect x="0" y="0" width="11" height="11" fill="#9eabbf"/><rect x="0" y="0" width="10" height="10" fill="#56667e"/><rect x="1.2" y="1.2" width="8.6" height="8.6" fill="#fff"/><path d="M2.2 5 L4.5 8.2 L9 2.2" stroke="#23324d" stroke-width="1.9" fill="none"/></svg>
<div class="t" style="left:16.7px;top:422.29px">22</div>
<div style="position:absolute;left:39px;top:420px;width:16px;height:18px;background:#fff"></div>
<svg style="position:absolute;left:40px;top:421px" width="14" height="14"><polygon points="4.2,0.5 9.8,0.5 13.5,4.2 13.5,9.8 9.8,13.5 4.2,13.5 0.5,9.8 0.5,4.2" fill="#00f" stroke="#000" stroke-width="1"/></svg>
<div class="t" style="left:65.4px;top:422.29px">350</div>
<div class="t" style="left:127.5px;top:422.29px">a [nm]</div>
<div class="t" style="left:217.5px;top:422.29px">1.1516</div>
<div class="t" style="left:271px;top:422.29px">JPCSAW (1986) 47, 879-885</div>
<div class="t" style="left:443px;top:422.29px">GeS,oP8,62</div>
<div class="t" style="left:533px;top:422.29px">0.0001</div>
<div class="t" style="left:597px;top:422.29px">*3*</div>
</div>
<div class="t" style="left:12px;top:687.59px;font-size:11px;color:#000;letter-spacing:0.12px">*1*=PCD entries, refined; *2*=PCD entries, averaged; *3*=from figure</div>
<div class="t" style="left:672px;top:197.59px;font-size:11px;color:#000;">Plot:</div>
<div style="position:absolute;left:673px;top:215px;width:551px;height:466px;background:#fff;box-sizing:border-box;border-top:1px solid #8a8a8a;border-left:1px solid #8a8a8a;border-right:1px solid #fff;border-bottom:1px solid #fff;box-shadow:inset 1px 1px 0 #696969, inset -1px -1px 0 #e3e3e3;"></div>
<svg style="position:absolute;left:0;top:0" width="1238" height="756" font-family="Liberation Sans, sans-serif">
<line x1="768.5" y1="261" x2="768.5" y2="651" stroke="#ababab" stroke-width="1" stroke-dasharray="3 3" stroke-dashoffset="-1"/>
<line x1="805.5" y1="261" x2="805.5" y2="651" stroke="#ababab" stroke-width="1" stroke-dasharray="3 3" stroke-dashoffset="-1"/>
<line x1="843.5" y1="261" x2="843.5" y2="651" stroke="#ababab" stroke-width="1" stroke-dasharray="3 3" stroke-dashoffset="-1"/>
<line x1="880.5" y1="261" x2="880.5" y2="651" stroke="#ababab" stroke-width="1" stroke-dasharray="3 3" stroke-dashoffset="-1"/>
<line x1="918.5" y1="261" x2="918.5" y2="651" stroke="#ababab" stroke-width="1" stroke-dasharray="3 3" stroke-dashoffset="-1"/>
<line x1="955.5" y1="261" x2="955.5" y2="651" stroke="#ababab" stroke-width="1" stroke-dasharray="3 3" stroke-dashoffset="-1"/>
<line x1="993.5" y1="261" x2="993.5" y2="651" stroke="#ababab" stroke-width="1" stroke-dasharray="3 3" stroke-dashoffset="-1"/>
<line x1="1030.5" y1="261" x2="1030.5" y2="651" stroke="#ababab" stroke-width="1" stroke-dasharray="3 3" stroke-dashoffset="-1"/>
<line x1="1068.5" y1="261" x2="1068.5" y2="651" stroke="#ababab" stroke-width="1" stroke-dasharray="3 3" stroke-dashoffset="-1"/>
<line x1="1105.5" y1="261" x2="1105.5" y2="651" stroke="#ababab" stroke-width="1" stroke-dasharray="3 3" stroke-dashoffset="-1"/>
<line x1="1143.5" y1="261" x2="1143.5" y2="651" stroke="#ababab" stroke-width="1" stroke-dasharray="3 3" stroke-dashoffset="-1"/>
<line x1="731" y1="618.5" x2="1180" y2="618.5" stroke="#ababab" stroke-width="1" stroke-dasharray="3 3" stroke-dashoffset="-11"/>
<line x1="731" y1="585.5" x2="1180" y2="585.5" stroke="#ababab" stroke-width="1" stroke-dasharray="3 3" stroke-dashoffset="-11"/>
<line x1="731" y1="553.5" x2="1180" y2="553.5" stroke="#ababab" stroke-width="1" stroke-dasharray="3 3" stroke-dashoffset="-11"/>
<line x1="731" y1="520.5" x2="1180" y2="520.5" stroke="#ababab" stroke-width="1" stroke-dasharray="3 3" stroke-dashoffset="-11"/>
<line x1="731" y1="488.5" x2="1180" y2="488.5" stroke="#ababab" stroke-width="1" stroke-dasharray="3 3" stroke-dashoffset="-11"/>
<line x1="731" y1="455.5" x2="1180" y2="455.5" stroke="#ababab" stroke-width="1" stroke-dasharray="3 3" stroke-dashoffset="-11"/>
<line x1="731" y1="423.5" x2="1180" y2="423.5" stroke="#ababab" stroke-width="1" stroke-dasharray="3 3" stroke-dashoffset="-11"/>
<line x1="731" y1="390.5" x2="1180" y2="390.5" stroke="#ababab" stroke-width="1" stroke-dasharray="3 3" stroke-dashoffset="-11"/>
<line x1="731" y1="358.5" x2="1180" y2="358.5" stroke="#ababab" stroke-width="1" stroke-dasharray="3 3" stroke-dashoffset="-11"/>
<line x1="731" y1="325.5" x2="1180" y2="325.5" stroke="#ababab" stroke-width="1" stroke-dasharray="3 3" stroke-dashoffset="-11"/>
<line x1="731" y1="293.5" x2="1180" y2="293.5" stroke="#ababab" stroke-width="1" stroke-dasharray="3 3" stroke-dashoffset="-11"/>
<rect x="730" y="256" width="1" height="396" fill="#000"/>
<rect x="726" y="651" width="459" height="1" fill="#000"/>
<rect x="730" y="260" width="451" height="1" fill="#000"/>
<rect x="1180" y="256" width="1" height="396" fill="#000"/>
<rect x="730" y="652" width="1" height="4" fill="#000"/>
<rect x="730" y="256" width="1" height="4" fill="#000"/>
<rect x="738" y="652" width="1" height="2" fill="#000"/>
<rect x="738" y="258" width="1" height="2" fill="#000"/>
<rect x="745" y="652" width="1" height="2" fill="#000"/>
<rect x="745" y="258" width="1" height="2" fill="#000"/>
<rect x="753" y="652" width="1" height="2" fill="#000"/>
<rect x="753" y="258" width="1" height="2" fill="#000"/>
<rect x="760" y="652" width="1" height="2" fill="#000"/>
<rect x="760" y="258" width="1" height="2" fill="#000"/>
<rect x="768" y="652" width="1" height="4" fill="#000"/>
<rect x="768" y="256" width="1" height="4" fill="#000"/>
<rect x="775" y="652" width="1" height="2" fill="#000"/>
<rect x="775" y="258" width="1" height="2" fill="#000"/>
<rect x="783" y="652" width="1" height="2" fill="#000"/>
<rect x="783" y="258" width="1" height="2" fill="#000"/>
<rect x="790" y="652" width="1" height="2" fill="#000"/>
<rect x="790" y="258" width="1" height="2" fill="#000"/>
<rect x="798" y="652" width="1" height="2" fill="#000"/>
<rect x="798" y="258" width="1" height="2" fill="#000"/>
<rect x="805" y="652" width="1" height="4" fill="#000"/>
<rect x="805" y="256" width="1" height="4" fill="#000"/>
<rect x="813" y="652" width="1" height="2" fill="#000"/>
<rect x="813" y="258" width="1" height="2" fill="#000"/>
<rect x="820" y="652" width="1" height="2" fill="#000"/>
<rect x="820" y="258" width="1" height="2" fill="#000"/>
<rect x="828" y="652" width="1" height="2" fill="#000"/>
<rect x="828" y="258" width="1" height="2" fill="#000"/>
<rect x="835" y="652" width="1" height="2" fill="#000"/>
<rect x="835" y="258" width="1" height="2" fill="#000"/>
<rect x="843" y="652" width="1" height="4" fill="#000"/>
<rect x="843" y="256" width="1" height="4" fill="#000"/>
<rect x="850" y="652" width="1" height="2" fill="#000"/>
<rect x="850" y="258" width="1" height="2" fill="#000"/>
<rect x="858" y="652" width="1" height="2" fill="#000"/>
<rect x="858" y="258" width="1" height="2" fill="#000"/>
<rect x="865" y="652" width="1" height="2" fill="#000"/>
<rect x="865" y="258" width="1" height="2" fill="#000"/>
<rect x="873" y="652" width="1" height="2" fill="#000"/>
<rect x="873" y="258" width="1" height="2" fill="#000"/>
<rect x="880" y="652" width="1" height="4" fill="#000"/>
<rect x="880" y="256" width="1" height="4" fill="#000"/>
<rect x="888" y="652" width="1" height="2" fill="#000"/>
<rect x="888" y="258" width="1" height="2" fill="#000"/>
<rect x="895" y="652" width="1" height="2" fill="#000"/>
<rect x="895" y="258" width="1" height="2" fill="#000"/>
<rect x="903" y="652" width="1" height="2" fill="#000"/>
<rect x="903" y="258" width="1" height="2" fill="#000"/>
<rect x="910" y="652" width="1" height="2" fill="#000"/>
<rect x="910" y="258" width="1" height="2" fill="#000"/>
<rect x="918" y="652" width="1" height="4" fill="#000"/>
<rect x="918" y="256" width="1" height="4" fill="#000"/>
<rect x="925" y="652" width="1" height="2" fill="#000"/>
<rect x="925" y="258" width="1" height="2" fill="#000"/>
<rect x="933" y="652" width="1" height="2" fill="#000"/>
<rect x="933" y="258" width="1" height="2" fill="#000"/>
<rect x="940" y="652" width="1" height="2" fill="#000"/>
<rect x="940" y="258" width="1" height="2" fill="#000"/>
<rect x="948" y="652" width="1" height="2" fill="#000"/>
<rect x="948" y="258" width="1" height="2" fill="#000"/>
<rect x="955" y="652" width="1" height="4" fill="#000"/>
<rect x="955" y="256" width="1" height="4" fill="#000"/>
<rect x="963" y="652" width="1" height="2" fill="#000"/>
<rect x="963" y="258" width="1" height="2" fill="#000"/>
<rect x="970" y="652" width="1" height="2" fill="#000"/>
<rect x="970" y="258" width="1" height="2" fill="#000"/>
<rect x="978" y="652" width="1" height="2" fill="#000"/>
<rect x="978" y="258" width="1" height="2" fill="#000"/>
<rect x="985" y="652" width="1" height="2" fill="#000"/>
<rect x="985" y="258" width="1" height="2" fill="#000"/>
<rect x="993" y="652" width="1" height="4" fill="#000"/>
<rect x="993" y="256" width="1" height="4" fill="#000"/>
<rect x="1000" y="652" width="1" height="2" fill="#000"/>
<rect x="1000" y="258" width="1" height="2" fill="#000"/>
<rect x="1008" y="652" width="1" height="2" fill="#000"/>
<rect x="1008" y="258" width="1" height="2" fill="#000"/>
<rect x="1015" y="652" width="1" height="2" fill="#000"/>
<rect x="1015" y="258" width="1" height="2" fill="#000"/>
<rect x="1023" y="652" width="1" height="2" fill="#000"/>
<rect x="1023" y="258" width="1" height="2" fill="#000"/>
<rect x="1030" y="652" width="1" height="4" fill="#000"/>
<rect x="1030" y="256" width="1" height="4" fill="#000"/>
<rect x="1038" y="652" width="1" height="2" fill="#000"/>
<rect x="1038" y="258" width="1" height="2" fill="#000"/>
<rect x="1045" y="652" width="1" height="2" fill="#000"/>
<rect x="1045" y="258" width="1" height="2" fill="#000"/>
<rect x="1053" y="652" width="1" height="2" fill="#000"/>
<rect x="1053" y="258" width="1" height="2" fill="#000"/>
<rect x="1060" y="652" width="1" height="2" fill="#000"/>
<rect x="1060" y="258" width="1" height="2" fill="#000"/>
<rect x="1068" y="652" width="1" height="4" fill="#000"/>
<rect x="1068" y="256" width="1" height="4" fill="#000"/>
<rect x="1075" y="652" width="1" height="2" fill="#000"/>
<rect x="1075" y="258" width="1" height="2" fill="#000"/>
<rect x="1083" y="652" width="1" height="2" fill="#000"/>
<rect x="1083" y="258" width="1" height="2" fill="#000"/>
<rect x="1090" y="652" width="1" height="2" fill="#000"/>
<rect x="1090" y="258" width="1" height="2" fill="#000"/>
<rect x="1098" y="652" width="1" height="2" fill="#000"/>
<rect x="1098" y="258" width="1" height="2" fill="#000"/>
<rect x="1105" y="652" width="1" height="4" fill="#000"/>
<rect x="1105" y="256" width="1" height="4" fill="#000"/>
<rect x="1113" y="652" width="1" height="2" fill="#000"/>
<rect x="1113" y="258" width="1" height="2" fill="#000"/>
<rect x="1120" y="652" width="1" height="2" fill="#000"/>
<rect x="1120" y="258" width="1" height="2" fill="#000"/>
<rect x="1128" y="652" width="1" height="2" fill="#000"/>
<rect x="1128" y="258" width="1" height="2" fill="#000"/>
<rect x="1135" y="652" width="1" height="2" fill="#000"/>
<rect x="1135" y="258" width="1" height="2" fill="#000"/>
<rect x="1143" y="652" width="1" height="4" fill="#000"/>
<rect x="1143" y="256" width="1" height="4" fill="#000"/>
<rect x="1150" y="652" width="1" height="2" fill="#000"/>
<rect x="1150" y="258" width="1" height="2" fill="#000"/>
<rect x="1158" y="652" width="1" height="2" fill="#000"/>
<rect x="1158" y="258" width="1" height="2" fill="#000"/>
<rect x="1165" y="652" width="1" height="2" fill="#000"/>
<rect x="1165" y="258" width="1" height="2" fill="#000"/>
<rect x="1173" y="652" width="1" height="2" fill="#000"/>
<rect x="1173" y="258" width="1" height="2" fill="#000"/>
<rect x="1180" y="652" width="1" height="4" fill="#000"/>
<rect x="1180" y="256" width="1" height="4" fill="#000"/>
<rect x="726" y="650" width="4" height="1" fill="#000"/>
<rect x="1181" y="650" width="4" height="1" fill="#000"/>
<rect x="728" y="644" width="2" height="1" fill="#000"/>
<rect x="1181" y="644" width="2" height="1" fill="#000"/>
<rect x="728" y="637" width="2" height="1" fill="#000"/>
<rect x="1181" y="637" width="2" height="1" fill="#000"/>
<rect x="728" y="631" width="2" height="1" fill="#000"/>
<rect x="1181" y="631" width="2" height="1" fill="#000"/>
<rect x="728" y="624" width="2" height="1" fill="#000"/>
<rect x="1181" y="624" width="2" height="1" fill="#000"/>
<rect x="726" y="618" width="4" height="1" fill="#000"/>
<rect x="1181" y="618" width="4" height="1" fill="#000"/>
<rect x="728" y="611" width="2" height="1" fill="#000"/>
<rect x="1181" y="611" width="2" height="1" fill="#000"/>
<rect x="728" y="605" width="2" height="1" fill="#000"/>
<rect x="1181" y="605" width="2" height="1" fill="#000"/>
<rect x="728" y="598" width="2" height="1" fill="#000"/>
<rect x="1181" y="598" width="2" height="1" fill="#000"/>
<rect x="728" y="592" width="2" height="1" fill="#000"/>
<rect x="1181" y="592" width="2" height="1" fill="#000"/>
<rect x="726" y="585" width="4" height="1" fill="#000"/>
<rect x="1181" y="585" width="4" height="1" fill="#000"/>
<rect x="728" y="579" width="2" height="1" fill="#000"/>
<rect x="1181" y="579" width="2" height="1" fill="#000"/>
<rect x="728" y="572" width="2" height="1" fill="#000"/>
<rect x="1181" y="572" width="2" height="1" fill="#000"/>
<rect x="728" y="566" width="2" height="1" fill="#000"/>
<rect x="1181" y="566" width="2" height="1" fill="#000"/>
<rect x="728" y="559" width="2" height="1" fill="#000"/>
<rect x="1181" y="559" width="2" height="1" fill="#000"/>
<rect x="726" y="553" width="4" height="1" fill="#000"/>
<rect x="1181" y="553" width="4" height="1" fill="#000"/>
<rect x="728" y="546" width="2" height="1" fill="#000"/>
<rect x="1181" y="546" width="2" height="1" fill="#000"/>
<rect x="728" y="540" width="2" height="1" fill="#000"/>
<rect x="1181" y="540" width="2" height="1" fill="#000"/>
<rect x="728" y="533" width="2" height="1" fill="#000"/>
<rect x="1181" y="533" width="2" height="1" fill="#000"/>
<rect x="728" y="527" width="2" height="1" fill="#000"/>
<rect x="1181" y="527" width="2" height="1" fill="#000"/>
<rect x="726" y="520" width="4" height="1" fill="#000"/>
<rect x="1181" y="520" width="4" height="1" fill="#000"/>
<rect x="728" y="514" width="2" height="1" fill="#000"/>
<rect x="1181" y="514" width="2" height="1" fill="#000"/>
<rect x="728" y="507" width="2" height="1" fill="#000"/>
<rect x="1181" y="507" width="2" height="1" fill="#000"/>
<rect x="728" y="501" width="2" height="1" fill="#000"/>
<rect x="1181" y="501" width="2" height="1" fill="#000"/>
<rect x="728" y="494" width="2" height="1" fill="#000"/>
<rect x="1181" y="494" width="2" height="1" fill="#000"/>
<rect x="726" y="488" width="4" height="1" fill="#000"/>
<rect x="1181" y="488" width="4" height="1" fill="#000"/>
<rect x="728" y="481" width="2" height="1" fill="#000"/>
<rect x="1181" y="481" width="2" height="1" fill="#000"/>
<rect x="728" y="475" width="2" height="1" fill="#000"/>
<rect x="1181" y="475" width="2" height="1" fill="#000"/>
<rect x="728" y="468" width="2" height="1" fill="#000"/>
<rect x="1181" y="468" width="2" height="1" fill="#000"/>
<rect x="728" y="462" width="2" height="1" fill="#000"/>
<rect x="1181" y="462" width="2" height="1" fill="#000"/>
<rect x="726" y="455" width="4" height="1" fill="#000"/>
<rect x="1181" y="455" width="4" height="1" fill="#000"/>
<rect x="728" y="449" width="2" height="1" fill="#000"/>
<rect x="1181" y="449" width="2" height="1" fill="#000"/>
<rect x="728" y="442" width="2" height="1" fill="#000"/>
<rect x="1181" y="442" width="2" height="1" fill="#000"/>
<rect x="728" y="436" width="2" height="1" fill="#000"/>
<rect x="1181" y="436" width="2" height="1" fill="#000"/>
<rect x="728" y="429" width="2" height="1" fill="#000"/>
<rect x="1181" y="429" width="2" height="1" fill="#000"/>
<rect x="726" y="423" width="4" height="1" fill="#000"/>
<rect x="1181" y="423" width="4" height="1" fill="#000"/>
<rect x="728" y="416" width="2" height="1" fill="#000"/>
<rect x="1181" y="416" width="2" height="1" fill="#000"/>
<rect x="728" y="410" width="2" height="1" fill="#000"/>
<rect x="1181" y="410" width="2" height="1" fill="#000"/>
<rect x="728" y="403" width="2" height="1" fill="#000"/>
<rect x="1181" y="403" width="2" height="1" fill="#000"/>
<rect x="728" y="397" width="2" height="1" fill="#000"/>
<rect x="1181" y="397" width="2" height="1" fill="#000"/>
<rect x="726" y="390" width="4" height="1" fill="#000"/>
<rect x="1181" y="390" width="4" height="1" fill="#000"/>
<rect x="728" y="384" width="2" height="1" fill="#000"/>
<rect x="1181" y="384" width="2" height="1" fill="#000"/>
<rect x="728" y="377" width="2" height="1" fill="#000"/>
<rect x="1181" y="377" width="2" height="1" fill="#000"/>
<rect x="728" y="371" width="2" height="1" fill="#000"/>
<rect x="1181" y="371" width="2" height="1" fill="#000"/>
<rect x="728" y="364" width="2" height="1" fill="#000"/>
<rect x="1181" y="364" width="2" height="1" fill="#000"/>
<rect x="726" y="358" width="4" height="1" fill="#000"/>
<rect x="1181" y="358" width="4" height="1" fill="#000"/>
<rect x="728" y="351" width="2" height="1" fill="#000"/>
<rect x="1181" y="351" width="2" height="1" fill="#000"/>
<rect x="728" y="345" width="2" height="1" fill="#000"/>
<rect x="1181" y="345" width="2" height="1" fill="#000"/>
<rect x="728" y="338" width="2" height="1" fill="#000"/>
<rect x="1181" y="338" width="2" height="1" fill="#000"/>
<rect x="728" y="332" width="2" height="1" fill="#000"/>
<rect x="1181" y="332" width="2" height="1" fill="#000"/>
<rect x="726" y="325" width="4" height="1" fill="#000"/>
<rect x="1181" y="325" width="4" height="1" fill="#000"/>
<rect x="728" y="319" width="2" height="1" fill="#000"/>
<rect x="1181" y="319" width="2" height="1" fill="#000"/>
<rect x="728" y="312" width="2" height="1" fill="#000"/>
<rect x="1181" y="312" width="2" height="1" fill="#000"/>
<rect x="728" y="306" width="2" height="1" fill="#000"/>
<rect x="1181" y="306" width="2" height="1" fill="#000"/>
<rect x="728" y="299" width="2" height="1" fill="#000"/>
<rect x="1181" y="299" width="2" height="1" fill="#000"/>
<rect x="726" y="293" width="4" height="1" fill="#000"/>
<rect x="1181" y="293" width="4" height="1" fill="#000"/>
<rect x="728" y="286" width="2" height="1" fill="#000"/>
<rect x="1181" y="286" width="2" height="1" fill="#000"/>
<rect x="728" y="280" width="2" height="1" fill="#000"/>
<rect x="1181" y="280" width="2" height="1" fill="#000"/>
<rect x="728" y="273" width="2" height="1" fill="#000"/>
<rect x="1181" y="273" width="2" height="1" fill="#000"/>
<rect x="728" y="267" width="2" height="1" fill="#000"/>
<rect x="1181" y="267" width="2" height="1" fill="#000"/>
<text x="730.5" y="666" font-size="10" letter-spacing="1.05" text-anchor="middle" stroke="#000" stroke-width="0.2" fill="#000">250</text>
<text x="768.0" y="666" font-size="10" letter-spacing="1.05" text-anchor="middle" stroke="#000" stroke-width="0.2" fill="#000">300</text>
<text x="805.5" y="666" font-size="10" letter-spacing="1.05" text-anchor="middle" stroke="#000" stroke-width="0.2" fill="#000">350</text>
<text x="843.0" y="666" font-size="10" letter-spacing="1.05" text-anchor="middle" stroke="#000" stroke-width="0.2" fill="#000">400</text>
<text x="880.5" y="666" font-size="10" letter-spacing="1.05" text-anchor="middle" stroke="#000" stroke-width="0.2" fill="#000">450</text>
<text x="918.0" y="666" font-size="10" letter-spacing="1.05" text-anchor="middle" stroke="#000" stroke-width="0.2" fill="#000">500</text>
<text x="955.5" y="666" font-size="10" letter-spacing="1.05" text-anchor="middle" stroke="#000" stroke-width="0.2" fill="#000">550</text>
<text x="993.0" y="666" font-size="10" letter-spacing="1.05" text-anchor="middle" stroke="#000" stroke-width="0.2" fill="#000">600</text>
<text x="1030.5" y="666" font-size="10" letter-spacing="1.05" text-anchor="middle" stroke="#000" stroke-width="0.2" fill="#000">650</text>
<text x="1068.0" y="666" font-size="10" letter-spacing="1.05" text-anchor="middle" stroke="#000" stroke-width="0.2" fill="#000">700</text>
<text x="1105.5" y="666" font-size="10" letter-spacing="1.05" text-anchor="middle" stroke="#000" stroke-width="0.2" fill="#000">750</text>
<text x="1143.0" y="666" font-size="10" letter-spacing="1.05" text-anchor="middle" stroke="#000" stroke-width="0.2" fill="#000">800</text>
<text x="1180.5" y="666" font-size="10" letter-spacing="1.05" text-anchor="middle" stroke="#000" stroke-width="0.2" fill="#000">850</text>
<text x="725" y="650" font-size="10" letter-spacing="1.05" text-anchor="end" stroke="#000" stroke-width="0.2" fill="#000">1.1</text>
<text x="725" y="618" font-size="10" letter-spacing="1.05" text-anchor="end" stroke="#000" stroke-width="0.2" fill="#000">1.11</text>
<text x="725" y="585" font-size="10" letter-spacing="1.05" text-anchor="end" stroke="#000" stroke-width="0.2" fill="#000">1.12</text>
<text x="725" y="553" font-size="10" letter-spacing="1.05" text-anchor="end" stroke="#000" stroke-width="0.2" fill="#000">1.13</text>
<text x="725" y="520" font-size="10" letter-spacing="1.05" text-anchor="end" stroke="#000" stroke-width="0.2" fill="#000">1.14</text>
<text x="725" y="488" font-size="10" letter-spacing="1.05" text-anchor="end" stroke="#000" stroke-width="0.2" fill="#000">1.15</text>
<text x="725" y="455" font-size="10" letter-spacing="1.05" text-anchor="end" stroke="#000" stroke-width="0.2" fill="#000">1.16</text>
<text x="725" y="423" font-size="10" letter-spacing="1.05" text-anchor="end" stroke="#000" stroke-width="0.2" fill="#000">1.17</text>
<text x="725" y="390" font-size="10" letter-spacing="1.05" text-anchor="end" stroke="#000" stroke-width="0.2" fill="#000">1.18</text>
<text x="725" y="358" font-size="10" letter-spacing="1.05" text-anchor="end" stroke="#000" stroke-width="0.2" fill="#000">1.19</text>
<text x="725" y="325" font-size="10" letter-spacing="1.05" text-anchor="end" stroke="#000" stroke-width="0.2" fill="#000">1.2</text>
<text x="725" y="293" font-size="10" letter-spacing="1.05" text-anchor="end" stroke="#000" stroke-width="0.2" fill="#000">1.21</text>
<text x="954" y="677.5" font-size="10.5" text-anchor="middle" fill="#000">T [K]</text>
<text transform="translate(684,455.5) rotate(-90)" font-size="9.5" font-weight="bold" letter-spacing="0.15" text-anchor="middle" fill="#000">Cell parameter a [nm]</text>
<line x1="731" y1="495.19" x2="1181" y2="424.91" stroke="#ff0000" stroke-width="1.1"/>
<polygon points="764.90,460.50 766.70,460.50 769.80,463.60 769.80,465.40 766.70,468.50 764.90,468.50 761.80,465.40 761.80,463.60" fill="#90c6f4" stroke="#000" stroke-width="1.3"/>
<polygon points="781.70,479.90 783.50,479.90 786.60,483.00 786.60,484.80 783.50,487.90 781.70,487.90 778.60,484.80 778.60,483.00" fill="#22bcbc" stroke="#000" stroke-width="1.3"/>
<polygon points="796.60,478.00 798.40,478.00 801.50,481.10 801.50,482.90 798.40,486.00 796.60,486.00 793.50,482.90 793.50,481.10" fill="#22bcbc" stroke="#000" stroke-width="1.3"/>
<polygon points="812.10,477.50 813.90,477.50 817.00,480.60 817.00,482.40 813.90,485.50 812.10,485.50 809.00,482.40 809.00,480.60" fill="#22bcbc" stroke="#000" stroke-width="1.3"/>
<polygon points="827.10,475.00 828.90,475.00 832.00,478.10 832.00,479.90 828.90,483.00 827.10,483.00 824.00,479.90 824.00,478.10" fill="#22bcbc" stroke="#000" stroke-width="1.3"/>
<polygon points="856.60,472.00 858.40,472.00 861.50,475.10 861.50,476.90 858.40,480.00 856.60,480.00 853.50,476.90 853.50,475.10" fill="#22bcbc" stroke="#000" stroke-width="1.3"/>
<polygon points="872.10,470.00 873.90,470.00 877.00,473.10 877.00,474.90 873.90,478.00 872.10,478.00 869.00,474.90 869.00,473.10" fill="#22bcbc" stroke="#000" stroke-width="1.3"/>
<polygon points="887.10,467.00 888.90,467.00 892.00,470.10 892.00,471.90 888.90,475.00 887.10,475.00 884.00,471.90 884.00,470.10" fill="#22bcbc" stroke="#000" stroke-width="1.3"/>
<polygon points="902.00,465.70 903.80,465.70 906.90,468.80 906.90,470.60 903.80,473.70 902.00,473.70 898.90,470.60 898.90,468.80" fill="#22bcbc" stroke="#000" stroke-width="1.3"/>
<polygon points="916.90,461.90 918.70,461.90 921.80,465.00 921.80,466.80 918.70,469.90 916.90,469.90 913.80,466.80 913.80,465.00" fill="#22bcbc" stroke="#000" stroke-width="1.3"/>
<polygon points="932.40,460.60 934.20,460.60 937.30,463.70 937.30,465.50 934.20,468.60 932.40,468.60 929.30,465.50 929.30,463.70" fill="#22bcbc" stroke="#000" stroke-width="1.3"/>
<polygon points="946.60,457.60 948.40,457.60 951.50,460.70 951.50,462.50 948.40,465.60 946.60,465.60 943.50,462.50 943.50,460.70" fill="#22bcbc" stroke="#000" stroke-width="1.3"/>
<polygon points="962.10,455.80 963.90,455.80 967.00,458.90 967.00,460.70 963.90,463.80 962.10,463.80 959.00,460.70 959.00,458.90" fill="#22bcbc" stroke="#000" stroke-width="1.3"/>
<polygon points="977.00,452.80 978.80,452.80 981.90,455.90 981.90,457.70 978.80,460.80 977.00,460.80 973.90,457.70 973.90,455.90" fill="#22bcbc" stroke="#000" stroke-width="1.3"/>
<polygon points="1006.70,447.00 1008.50,447.00 1011.60,450.10 1011.60,451.90 1008.50,455.00 1006.70,455.00 1003.60,451.90 1003.60,450.10" fill="#22bcbc" stroke="#000" stroke-width="1.3"/>
<polygon points="1021.50,444.70 1023.30,444.70 1026.40,447.80 1026.40,449.60 1023.30,452.70 1021.50,452.70 1018.40,449.60 1018.40,447.80" fill="#22bcbc" stroke="#000" stroke-width="1.3"/>
<polygon points="1111.80,423.80 1113.60,423.80 1116.70,426.90 1116.70,428.70 1113.60,431.80 1111.80,431.80 1108.70,428.70 1108.70,426.90" fill="#22bcbc" stroke="#000" stroke-width="1.3"/>
<polygon points="1127.30,420.50 1129.10,420.50 1132.20,423.60 1132.20,425.40 1129.10,428.50 1127.30,428.50 1124.20,425.40 1124.20,423.60" fill="#22bcbc" stroke="#000" stroke-width="1.3"/>
<polygon points="1145.40,416.00 1147.20,416.00 1150.30,419.10 1150.30,420.90 1147.20,424.00 1145.40,424.00 1142.30,420.90 1142.30,419.10" fill="#22bcbc" stroke="#000" stroke-width="1.3"/>
<polygon points="765.10,488.00 766.90,488.00 770.00,491.10 770.00,492.90 766.90,496.00 765.10,496.00 762.00,492.90 762.00,491.10" fill="#10b810" stroke="#000" stroke-width="1.3"/>
<polygon points="1134.40,418.60 1136.20,418.60 1139.30,421.70 1139.30,423.50 1136.20,426.60 1134.40,426.60 1131.30,423.50 1131.30,421.70" fill="#10b810" stroke="#000" stroke-width="1.3"/>
<polygon points="1048.50,441.20 1050.30,441.20 1053.40,444.30 1053.40,446.10 1050.30,449.20 1048.50,449.20 1045.40,446.10 1045.40,444.30" fill="#ff0000" stroke="#000" stroke-width="1.3"/>
<polygon points="1085.30,432.80 1087.10,432.80 1090.20,435.90 1090.20,437.70 1087.10,440.80 1085.30,440.80 1082.20,437.70 1082.20,435.90" fill="#ff0000" stroke="#000" stroke-width="1.3"/>
<polygon points="766.30,482.00 768.10,482.00 771.20,485.10 771.20,486.90 768.10,490.00 766.30,490.00 763.20,486.90 763.20,485.10" fill="#000" stroke="#000" stroke-width="1.3"/>
<polygon points="1036.90,440.60 1038.70,440.60 1041.80,443.70 1041.80,445.50 1038.70,448.60 1036.90,448.60 1033.80,445.50 1033.80,443.70" fill="#000" stroke="#000" stroke-width="1.3"/>
<polygon points="1044.60,439.30 1046.40,439.30 1049.50,442.40 1049.50,444.20 1046.40,447.30 1044.60,447.30 1041.50,444.20 1041.50,442.40" fill="#000" stroke="#000" stroke-width="1.3"/>
<polygon points="1052.40,436.70 1054.20,436.70 1057.30,439.80 1057.30,441.60 1054.20,444.70 1052.40,444.70 1049.30,441.60 1049.30,439.80" fill="#000" stroke="#000" stroke-width="1.3"/>
<polygon points="1058.80,436.00 1060.60,436.00 1063.70,439.10 1063.70,440.90 1060.60,444.00 1058.80,444.00 1055.70,440.90 1055.70,439.10" fill="#000" stroke="#000" stroke-width="1.3"/>
<polygon points="1067.20,435.00 1069.00,435.00 1072.10,438.10 1072.10,439.90 1069.00,443.00 1067.20,443.00 1064.10,439.90 1064.10,438.10" fill="#000" stroke="#000" stroke-width="1.3"/>
<polygon points="1075.60,433.20 1077.40,433.20 1080.50,436.30 1080.50,438.10 1077.40,441.20 1075.60,441.20 1072.50,438.10 1072.50,436.30" fill="#000" stroke="#000" stroke-width="1.3"/>
<polygon points="1082.10,431.50 1083.90,431.50 1087.00,434.60 1087.00,436.40 1083.90,439.50 1082.10,439.50 1079.00,436.40 1079.00,434.60" fill="#000" stroke="#000" stroke-width="1.3"/>
<polygon points="1089.10,430.20 1090.90,430.20 1094.00,433.30 1094.00,435.10 1090.90,438.20 1089.10,438.20 1086.00,435.10 1086.00,433.30" fill="#000" stroke="#000" stroke-width="1.3"/>
<polygon points="1096.90,428.90 1098.70,428.90 1101.80,432.00 1101.80,433.80 1098.70,436.90 1096.90,436.90 1093.80,433.80 1093.80,432.00" fill="#000" stroke="#000" stroke-width="1.3"/>
<polygon points="1104.00,427.00 1105.80,427.00 1108.90,430.10 1108.90,431.90 1105.80,435.00 1104.00,435.00 1100.90,431.90 1100.90,430.10" fill="#000" stroke="#000" stroke-width="1.3"/>
<polygon points="1111.80,426.40 1113.60,426.40 1116.70,429.50 1116.70,431.30 1113.60,434.40 1111.80,434.40 1108.70,431.30 1108.70,429.50" fill="#000" stroke="#000" stroke-width="1.3"/>
<polygon points="1119.50,424.40 1121.30,424.40 1124.40,427.50 1124.40,429.30 1121.30,432.40 1119.50,432.40 1116.40,429.30 1116.40,427.50" fill="#000" stroke="#000" stroke-width="1.3"/>
<polygon points="1127.90,423.80 1129.70,423.80 1132.80,426.90 1132.80,428.70 1129.70,431.80 1127.90,431.80 1124.80,428.70 1124.80,426.90" fill="#000" stroke="#000" stroke-width="1.3"/>
<polygon points="1134.40,422.50 1136.20,422.50 1139.30,425.60 1139.30,427.40 1136.20,430.50 1134.40,430.50 1131.30,427.40 1131.30,425.60" fill="#000" stroke="#000" stroke-width="1.3"/>
<rect x="1062" y="434" width="13" height="13" fill="#ffff00"/>
<polygon points="1067.60,436.00 1069.40,436.00 1072.50,439.10 1072.50,440.90 1069.40,444.00 1067.60,444.00 1064.50,440.90 1064.50,439.10" fill="#000" stroke="#000" stroke-width="1.3"/>
<polygon points="785.10,482.50 786.90,482.50 790.00,485.60 790.00,487.40 786.90,490.50 785.10,490.50 782.00,487.40 782.00,485.60" fill="#ff0000" stroke="#000" stroke-width="1.3"/>
<polygon points="823.10,476.50 824.90,476.50 828.00,479.60 828.00,481.40 824.90,484.50 823.10,484.50 820.00,481.40 820.00,479.60" fill="#ff0000" stroke="#000" stroke-width="1.3"/>
<polygon points="842.10,474.00 843.90,474.00 847.00,477.10 847.00,478.90 843.90,482.00 842.10,482.00 839.00,478.90 839.00,477.10" fill="#ff0000" stroke="#000" stroke-width="1.3"/>
<polygon points="860.10,472.00 861.90,472.00 865.00,475.10 865.00,476.90 861.90,480.00 860.10,480.00 857.00,476.90 857.00,475.10" fill="#ff0000" stroke="#000" stroke-width="1.3"/>
<polygon points="879.10,468.00 880.90,468.00 884.00,471.10 884.00,472.90 880.90,476.00 879.10,476.00 876.00,472.90 876.00,471.10" fill="#ff0000" stroke="#000" stroke-width="1.3"/>
<polygon points="897.50,465.70 899.30,465.70 902.40,468.80 902.40,470.60 899.30,473.70 897.50,473.70 894.40,470.60 894.40,468.80" fill="#ff0000" stroke="#000" stroke-width="1.3"/>
<polygon points="935.60,461.00 937.40,461.00 940.50,464.10 940.50,465.90 937.40,469.00 935.60,469.00 932.50,465.90 932.50,464.10" fill="#ff0000" stroke="#000" stroke-width="1.3"/>
<polygon points="954.00,457.60 955.80,457.60 958.90,460.70 958.90,462.50 955.80,465.60 954.00,465.60 950.90,462.50 950.90,460.70" fill="#ff0000" stroke="#000" stroke-width="1.3"/>
<polygon points="972.40,454.80 974.20,454.80 977.30,457.90 977.30,459.70 974.20,462.80 972.40,462.80 969.30,459.70 969.30,457.90" fill="#ff0000" stroke="#000" stroke-width="1.3"/>
<polygon points="992.10,450.20 993.90,450.20 997.00,453.30 997.00,455.10 993.90,458.20 992.10,458.20 989.00,455.10 989.00,453.30" fill="#ff0000" stroke="#000" stroke-width="1.3"/>
<polygon points="1009.90,448.00 1011.70,448.00 1014.80,451.10 1014.80,452.90 1011.70,456.00 1009.90,456.00 1006.80,452.90 1006.80,451.10" fill="#ff0000" stroke="#000" stroke-width="1.3"/>
<polygon points="1029.10,444.80 1030.90,444.80 1034.00,447.90 1034.00,449.70 1030.90,452.80 1029.10,452.80 1026.00,449.70 1026.00,447.90" fill="#ff0000" stroke="#000" stroke-width="1.3"/>
<polygon points="1104.00,428.90 1105.80,428.90 1108.90,432.00 1108.90,433.80 1105.80,436.90 1104.00,436.90 1100.90,433.80 1100.90,432.00" fill="#ff0000" stroke="#000" stroke-width="1.3"/>
<polygon points="1123.10,423.80 1124.90,423.80 1128.00,426.90 1128.00,428.70 1124.90,431.80 1123.10,431.80 1120.00,428.70 1120.00,426.90" fill="#ff0000" stroke="#000" stroke-width="1.3"/>
<polygon points="1142.10,419.90 1143.90,419.90 1147.00,423.00 1147.00,424.80 1143.90,427.90 1142.10,427.90 1139.00,424.80 1139.00,423.00" fill="#ff0000" stroke="#000" stroke-width="1.3"/>
<polygon points="767.60,482.00 769.40,482.00 772.50,485.10 772.50,486.90 769.40,490.00 767.60,490.00 764.50,486.90 764.50,485.10" fill="#0000ff" stroke="#000" stroke-width="1.3"/>
<polygon points="804.10,479.00 805.90,479.00 809.00,482.10 809.00,483.90 805.90,487.00 804.10,487.00 801.00,483.90 801.00,482.10" fill="#0000ff" stroke="#000" stroke-width="1.3"/>
<polygon points="879.10,471.00 880.90,471.00 884.00,474.10 884.00,475.90 880.90,479.00 879.10,479.00 876.00,475.90 876.00,474.10" fill="#0000ff" stroke="#000" stroke-width="1.3"/>
<polygon points="916.90,467.00 918.70,467.00 921.80,470.10 921.80,471.90 918.70,475.00 916.90,475.00 913.80,471.90 913.80,470.10" fill="#0000ff" stroke="#000" stroke-width="1.3"/>
<polygon points="954.00,464.10 955.80,464.10 958.90,467.20 958.90,469.00 955.80,472.10 954.00,472.10 950.90,469.00 950.90,467.20" fill="#0000ff" stroke="#000" stroke-width="1.3"/>
<polygon points="992.10,458.90 993.90,458.90 997.00,462.00 997.00,463.80 993.90,466.90 992.10,466.90 989.00,463.80 989.00,462.00" fill="#0000ff" stroke="#000" stroke-width="1.3"/>
<polygon points="1029.10,454.80 1030.90,454.80 1034.00,457.90 1034.00,459.70 1030.90,462.80 1029.10,462.80 1026.00,459.70 1026.00,457.90" fill="#0000ff" stroke="#000" stroke-width="1.3"/>
<polygon points="1067.20,451.80 1069.00,451.80 1072.10,454.90 1072.10,456.70 1069.00,459.80 1067.20,459.80 1064.10,456.70 1064.10,454.90" fill="#0000ff" stroke="#000" stroke-width="1.3"/>
<polygon points="1104.00,448.70 1105.80,448.70 1108.90,451.80 1108.90,453.60 1105.80,456.70 1104.00,456.70 1100.90,453.60 1100.90,451.80" fill="#0000ff" stroke="#000" stroke-width="1.3"/>
<polygon points="1142.10,443.80 1143.90,443.80 1147.00,446.90 1147.00,448.70 1143.90,451.80 1142.10,451.80 1139.00,448.70 1139.00,446.90" fill="#0000ff" stroke="#000" stroke-width="1.3"/>
<polygon points="1179.00,439.90 1180.80,439.90 1183.90,443.00 1183.90,444.80 1180.80,447.90 1179.00,447.90 1175.90,444.80 1175.90,443.00" fill="#0000ff" stroke="#000" stroke-width="1.3"/>
</svg>
<div class="t" style="left:672px;top:687.59px;font-size:11px;color:#000;">Regression line: y = 1.13893 + 3.60417e-005 * x</div>
<div style="position:absolute;left:12px;top:708px;width:1212px;height:1px;background:#a0a0a0;"></div>
<div style="position:absolute;left:12px;top:709px;width:1212px;height:1px;background:#fff;"></div>
<div style="position:absolute;left:12px;top:721px;width:96px;height:23px;background:#f0f0f0;box-sizing:border-box;box-shadow:inset 1px 1px 0 #e3e3e3, inset 2px 2px 0 #fff, inset -1px -1px 0 #696969, inset -2px -2px 0 #a0a0a0;"></div>
<div class="t" style="left:12px;top:725.5px;width:96px;text-align:center;letter-spacing:0px">Refresh</div>
<div style="position:absolute;left:115px;top:721px;width:96px;height:23px;background:#f0f0f0;box-sizing:border-box;border:1px solid #646464;box-shadow:inset 1px 1px 0 #fff, inset -1px -1px 0 #696969, inset -2px -2px 0 #a0a0a0;"></div>
<div class="t" style="left:115px;top:725.5px;width:96px;text-align:center;letter-spacing:-0.25px">Regression line</div>
<div style="position:absolute;left:218px;top:722px;width:94px;height:21px;background:#e1e1e1;border:1px solid #adadad;box-sizing:border-box;"></div>
<div class="t" style="left:241px;top:726.5px;">Select</div>
<svg style="position:absolute;left:297px;top:730px" width="10" height="5"><path d="M0 0 H9 L4.5 5 Z" fill="#000"/></svg>
<div style="position:absolute;left:909px;top:722px;width:73px;height:21px;background:#e1e1e1;border:1px solid #adadad;box-sizing:border-box;"></div>
<div class="t" style="left:925px;top:726.5px;">Copy</div>
<svg style="position:absolute;left:967px;top:730px" width="10" height="5"><path d="M0 0 H9 L4.5 5 Z" fill="#000"/></svg>
<div style="position:absolute;left:990px;top:722px;width:73px;height:21px;background:#e1e1e1;border:1px solid #adadad;box-sizing:border-box;"></div>
<div class="t" style="left:1005px;top:726.5px;">Save</div>
<svg style="position:absolute;left:1048px;top:730px" width="10" height="5"><path d="M0 0 H9 L4.5 5 Z" fill="#000"/></svg>
<div style="position:absolute;left:1070px;top:721px;width:75px;height:23px;background:#f0f0f0;box-sizing:border-box;box-shadow:inset 1px 1px 0 #e3e3e3, inset 2px 2px 0 #fff, inset -1px -1px 0 #696969, inset -2px -2px 0 #a0a0a0;"></div>
<div class="t" style="left:1070px;top:725.5px;width:75px;text-align:center;letter-spacing:0px">Print...</div>
<div style="position:absolute;left:1151px;top:721px;width:75px;height:23px;background:#f0f0f0;box-sizing:border-box;box-shadow:inset 1px 1px 0 #e3e3e3, inset 2px 2px 0 #fff, inset -1px -1px 0 #696969, inset -2px -2px 0 #a0a0a0;"></div>
<div class="t" style="left:1151px;top:725.5px;width:75px;text-align:center;letter-spacing:0px">Close</div>
<svg style="position:absolute;left:1222px;top:740px" width="14" height="14"><path d="M13 2 L2 13 M13 6 L6 13 M13 10 L10 13" stroke="#b0b0b0" stroke-width="1.2"/></svg>
<div style="position:absolute;left:0px;top:0px;width:1238px;height:756px;box-sizing:border-box;border:1px solid #1a78d0;"></div>
<svg style="position:absolute;left:0;top:0" width="1238" height="756">
<defs><filter id="sh" x="-20%" y="-20%" width="140%" height="140%"><feDropShadow dx="2.5" dy="3.5" stdDeviation="3" flood-color="#000" flood-opacity="0.5"/></filter></defs>
<g filter="url(#sh)">
<path d="M337.8,643.5 L164.6,723.5 L404,643.5 L531.5,643.5 Q557.5,643.5 557.5,617.5 L557.5,582 Q557.5,556 531.5,556 L308.5,556 Q282.5,556 282.5,582 L282.5,617.5 Q282.5,643.5 308.5,643.5 Z" fill="#fff" stroke="#e64646" stroke-width="3" stroke-linejoin="miter" stroke-miterlimit="10"/>
<polygon points="562.9,568.7 697.9,512.8 694.0,503.6 560.1,562.3" fill="#e64646"/><circle cx="561.5" cy="565.5" r="3.5" fill="#e64646"/><polygon points="720.9,497.6 688.5,495.6 699.8,522.7" fill="#e64646"/>
<polygon points="560.9,640.6 643.5,684.9 648.1,676.0 564.1,634.4" fill="#e64646"/><circle cx="562.5" cy="637.5" r="3.5" fill="#e64646"/><polygon points="670,692.9 650.6,666.7 637.1,692.9" fill="#e64646"/>
</g>
<text x="314.6" y="596" font-family="Liberation Sans, sans-serif" font-size="16.5" fill="#e94b50" textLength="206.5" lengthAdjust="spacingAndGlyphs">Draw a regression line and its</text>
<text x="302.4" y="614" font-family="Liberation Sans, sans-serif" font-size="16.5" fill="#e94b50" textLength="231.5" lengthAdjust="spacingAndGlyphs">equation by clicking on this button</text>
</svg>
</body></html>
